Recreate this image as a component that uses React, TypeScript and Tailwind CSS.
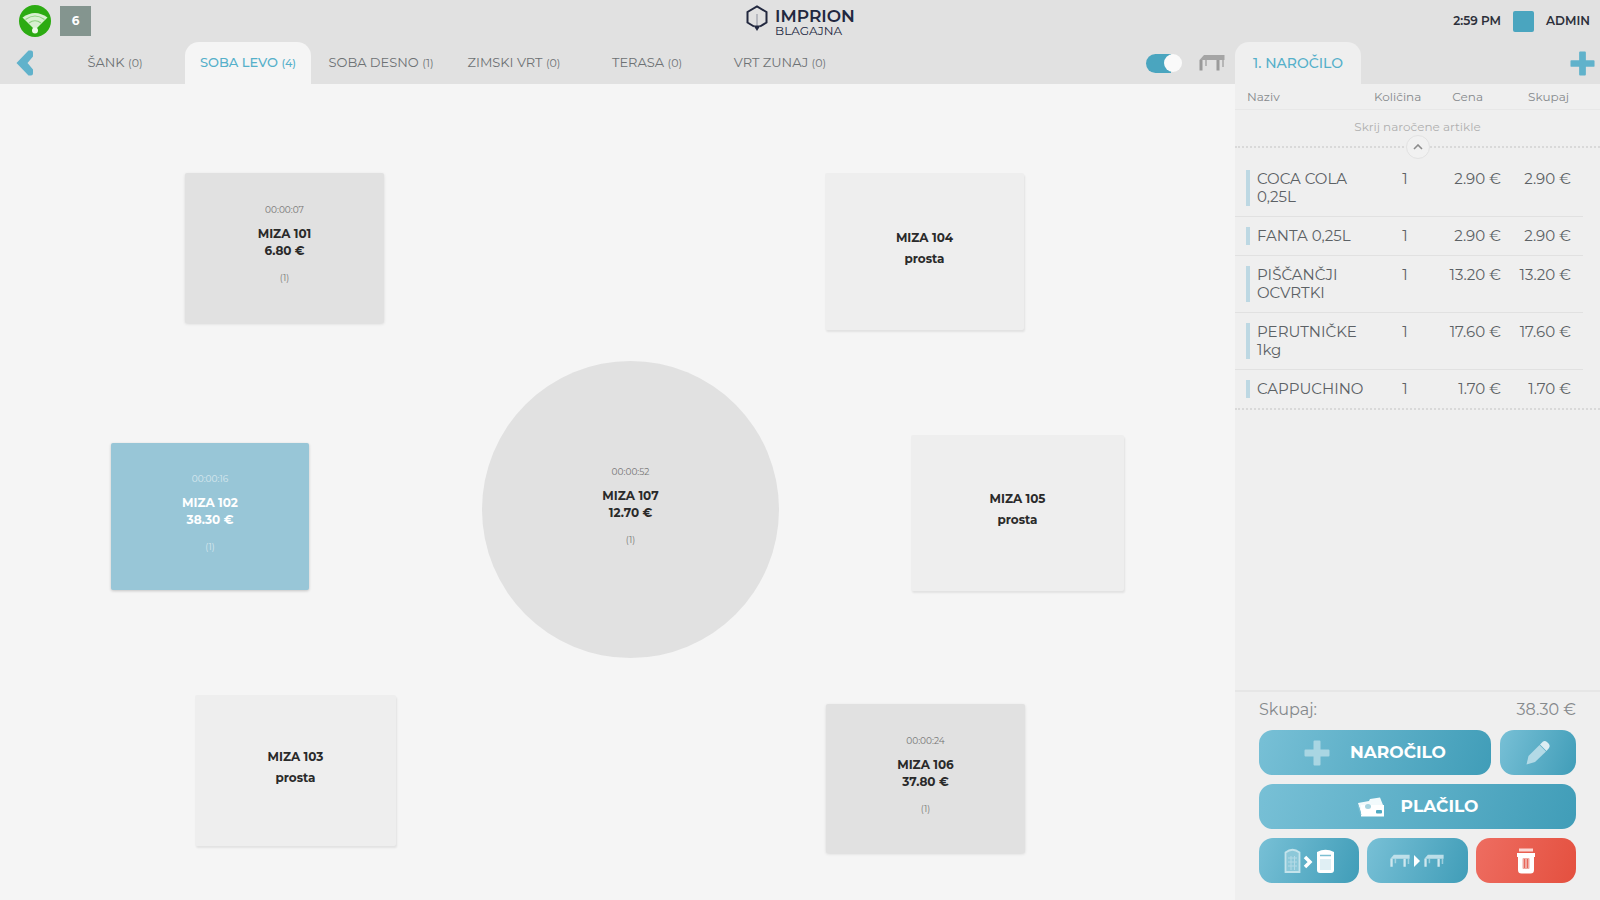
import React, { useState } from 'react';
import clsx from 'clsx';

type Room = { name: string; count: number };

type TableItem = {
  name: string;
  place: string;
  status: 'free' | 'taken' | 'selected';
  round?: boolean;
  time?: string;
  total?: string;
};

const rooms: Room[] = [
  { name: 'ŠANK', count: 0 },
  { name: 'SOBA LEVO', count: 4 },
  { name: 'SOBA DESNO', count: 1 },
  { name: 'ZIMSKI VRT', count: 0 },
  { name: 'TERASA', count: 0 },
  { name: 'VRT ZUNAJ', count: 0 },
];

const tables: TableItem[] = [
  { name: 'MIZA 101', place: 'left-[185px] top-[89px] w-[199px] h-[150px]', status: 'taken', time: '00:00:07', total: '6.80 €' },
  { name: 'MIZA 102', place: 'left-[111px] top-[359px] w-[198px] h-[147px]', status: 'selected', time: '00:00:16', total: '38.30 €' },
  { name: 'MIZA 103', place: 'left-[195px] top-[611px] w-[201px] h-[151px]', status: 'free' },
  { name: 'MIZA 104', place: 'left-[825px] top-[89px] w-[199px] h-[157px]', status: 'free' },
  { name: 'MIZA 105', place: 'left-[911px] top-[351px] w-[213px] h-[156px]', status: 'free' },
  { name: 'MIZA 106', place: 'left-[826px] top-[620px] w-[199px] h-[149px]', status: 'taken', time: '00:00:24', total: '37.80 €' },
  { name: 'MIZA 107', place: 'left-[482px] top-[277px] w-[297px] h-[297px]', status: 'taken', round: true, time: '00:00:52', total: '12.70 €' },
];

const items = [
  { name: 'COCA COLA 0,25L', qty: 1, price: '2.90 €', total: '2.90 €' },
  { name: 'FANTA 0,25L', qty: 1, price: '2.90 €', total: '2.90 €' },
  { name: 'PIŠČANČJI OCVRTKI', qty: 1, price: '13.20 €', total: '13.20 €' },
  { name: 'PERUTNIČKE 1kg', qty: 1, price: '17.60 €', total: '17.60 €' },
  { name: 'CAPPUCHINO', qty: 1, price: '1.70 €', total: '1.70 €' },
];

function WifiBadge() {
  return (
    <svg viewBox="0 0 32 32" className="size-8">
      <circle cx="16" cy="16" r="16" fill="#2cab12" />
      <path d="M3.5 12.5 Q16 3.5 28.5 12.5 L16 25 Z" fill="#d8f0d0" />
      <path d="M6.5 14.5 Q16 7.5 25.5 14.5 M10 18 Q16 13.5 22 18" fill="none" stroke="#8fd080" strokeWidth="1.2" />
      <circle cx="16" cy="25.5" r="3" fill="#eefaea" />
    </svg>
  );
}

function Logo() {
  return (
    <div className="flex items-start gap-[6px] text-[#22283f]">
      <svg viewBox="0 0 24 27" className="h-[27px] w-6" fill="none" stroke="currentColor">
        <path d="M9 21.5 L2.5 17.5 V7 L12 1.5 L21.5 7 V17.5 L15 21.5" strokeWidth="2" />
        <path d="M12 9 V21" strokeWidth="1.5" stroke="#a9abb5" />
        <path d="M8.5 20.5 H15.5 L12 26 Z" fill="currentColor" stroke="none" />
      </svg>
      <div className="flex flex-col pt-[3px]">
        <span className="text-[17px] leading-[17px] font-semibold">IMPRION</span>
        <span className="text-[12px] leading-[12px]">BLAGAJNA</span>
      </div>
    </div>
  );
}

function DeskIcon({ className }: { className?: string }) {
  return (
    <svg viewBox="0 0 26 16" className={className} fill="currentColor">
      <path d="M5 0 H25.5 V5 H0.5 Z" opacity="0.85" />
      <path d="M0.5 5 H3.5 V15.5 H0.5 Z M17.5 5 H20.5 V15.5 H17.5 Z" />
      <path d="M6 5 H8 V11 H6 Z M23 5 H25 V12 H23 Z" opacity="0.6" />
    </svg>
  );
}

function PlusIcon({ className }: { className?: string }) {
  return (
    <svg viewBox="0 0 26 26" className={className} fill="currentColor">
      <path d="M10.5 0.5 H15.5 Q16.5 0.5 16.5 1.5 V9.5 H24.5 Q25.5 9.5 25.5 10.5 V15.5 Q25.5 16.5 24.5 16.5 H16.5 V24.5 Q16.5 25.5 15.5 25.5 H10.5 Q9.5 25.5 9.5 24.5 V16.5 H1.5 Q0.5 16.5 0.5 15.5 V10.5 Q0.5 9.5 1.5 9.5 H9.5 V1.5 Q9.5 0.5 10.5 0.5 Z" />
    </svg>
  );
}

function PencilIcon() {
  return (
    <svg viewBox="0 0 26 26" className="size-[26px]">
      <path d="M1.5 24.5 L3.5 16 L14.5 5 L21 11.5 L10 22 Z" fill="#b3dae6" />
      <path d="M15 4.5 L18 1.5 Q20 0.5 22 2 L24 4 Q25.5 6 24 8 L21.5 11 Z" fill="#dcedf3" />
    </svg>
  );
}

function CashIcon() {
  return (
    <svg viewBox="0 0 28 20" className="h-5 w-7">
      <path d="M1 6 L12 4 L13 2 L23 0.5 L26 8 V18 L5 19 Z" fill="#f2fafc" />
      <path d="M4 8 H27 V19.5 H4 Z" fill="#ffffff" />
      <ellipse cx="11" cy="9.5" rx="3" ry="2.5" fill="#a6d3e0" />
      <rect x="19" y="13" width="6" height="3.5" rx="1" fill="#4fa9c2" />
      <path d="M1 8 L4 18" stroke="#7cc0d4" strokeWidth="1" />
    </svg>
  );
}

function MoveItemsIcon() {
  return (
    <svg viewBox="0 0 52 26" className="h-[26px] w-[52px]">
      <path d="M2.5 4.5 Q9.5 -1 16.5 4.5 V24 H2.5 Z" fill="#8cc8d9" stroke="#c4e3eb" strokeWidth="1.8" />
      <path d="M5 10 H14 M5 14 H14 M5 18 H14 M8 8 V22 M11.5 8 V22" stroke="#b3dae6" />
      <path d="M22 9 L27 14 L22 19" fill="none" stroke="#ffffff" strokeWidth="3.5" />
      <path d="M34 4 Q42.5 -0.5 51 4 V22 Q51 25 48 25 H37 Q34 25 34 22 Z" fill="#ffffff" />
      <path d="M37 7.5 H48" stroke="#7cbfd2" strokeWidth="1.5" />
      <rect x="37" y="11" width="11" height="11" fill="#e0eff4" />
    </svg>
  );
}

function BinIcon() {
  return (
    <svg viewBox="0 0 20 26" className="h-[26px] w-5">
      <path d="M3 0.5 H17 V3.5 H3 Z" fill="#fbd9d5" />
      <path d="M1 5 H19 V9 H18 V22 Q18 25.5 14.5 25.5 H5.5 Q2 25.5 2 22 V9 H1 Z" fill="#ffffff" />
      <rect x="6.5" y="10" width="7" height="11" rx="1" fill="#f0aaa3" />
      <path d="M8.5 11 V20 M11.5 11 V20" stroke="#e8665a" />
    </svg>
  );
}

const blueButton =
  'flex h-[45px] items-center justify-center rounded-[14px] bg-linear-[110deg] from-[#78c0d6] to-[#409db8] text-white cursor-pointer';

function FloorTable({ table }: { table: TableItem }) {
  const free = table.status === 'free';
  return (
    <button
      className={clsx(
        'absolute flex flex-col items-center justify-center pb-2 text-[12px] font-bold cursor-pointer',
        table.place,
        table.round ? 'rounded-full' : 'rounded-[2px]',
        free && 'bg-[#eeeeee] text-[#2a2a2a] leading-[21px] shadow-[1px_2px_2px_rgba(0,0,0,0.08)]',
        table.status === 'taken' && 'bg-[#e1e1e1] text-[#2a2a2a] leading-[17px]',
        table.status === 'taken' && !table.round && 'shadow-[0_1px_3px_rgba(0,0,0,0.12)]',
        table.status === 'selected' && 'bg-[#98c6d7] text-white leading-[17px] shadow-[0_1px_3px_rgba(0,0,0,0.2)]',
      )}
    >
      {table.time && <span className="mb-2 text-[9px] leading-[14px] font-normal opacity-60">{table.time}</span>}
      <span>{table.name}</span>
      <span>{free ? 'prosta' : table.total}</span>
      {table.time && <span className="mt-3 text-[9px] leading-[14px] font-normal opacity-60">(1)</span>}
    </button>
  );
}

function OrderPanel() {
  return (
    <aside className="flex flex-col bg-[#efefef] text-[#5c6165]">
      <table className="w-full table-fixed border-collapse">
        <colgroup>
          <col />
          <col className="w-[62px]" />
          <col className="w-[65px]" />
          <col className="w-[82px]" />
          <col className="w-[17px]" />
        </colgroup>
        <thead className="text-[12px] leading-[25px] text-[#85898c]">
          <tr className="border-b border-[#e7e7e7]">
            <th className="pl-3 text-left font-normal">Naziv</th>
            <th className="pr-[18px] text-right font-normal whitespace-nowrap">Količina</th>
            <th className="pr-[18px] text-right font-normal">Cena</th>
            <th className="pr-[14px] text-right font-normal">Skupaj</th>
            <td />
          </tr>
        </thead>
        <tbody className="text-[15px] leading-[18px]">
          <tr>
            <td colSpan={5} className="pb-3">
              <div className="relative border-b-2 border-dotted border-[#d9d9d9] pt-2 pb-[11px] text-center text-[12px] leading-[17px] text-[#b0b0b0]">
                Skrij naročene artikle
                <button
                  aria-label="Skrij"
                  className="absolute -bottom-[13px] left-1/2 flex size-6 -translate-x-1/2 items-center justify-center rounded-full border border-[#e2e2e2] bg-[#f1f1f1] cursor-pointer"
                >
                  <svg viewBox="0 0 10 6" className="h-[6px] w-[10px]" fill="none" stroke="#8c8c8c" strokeWidth="1.6">
                    <path d="M1 5 L5 1 L9 5" />
                  </svg>
                </button>
              </div>
            </td>
          </tr>
          {items.map((item, i) => {
            const cell = clsx('py-[10px] align-top', i < items.length - 1 && 'border-b border-[#e1e1e1]');
            return (
              <tr key={item.name}>
                <td className={clsx(cell, 'pl-[11px]')}>
                  <div className="flex gap-[7px]">
                    <span className="w-1 shrink-0 bg-[#bdd8e3]" />
                    <span>{item.name}</span>
                  </div>
                </td>
                <td className={clsx(cell, 'text-center')}>{item.qty}</td>
                <td className={clsx(cell, 'text-right whitespace-nowrap')}>{item.price}</td>
                <td className={clsx(cell, 'pr-3 text-right whitespace-nowrap')}>{item.total}</td>
                <td />
              </tr>
            );
          })}
        </tbody>
      </table>
      <div className="border-t-2 border-dotted border-[#d9d9d9]" />

      <div className="mt-auto flex flex-col gap-[9px] border-t-2 border-[#e6e6e6] px-6 pt-[7px] pb-[17px]">
        <div className="flex justify-between text-[16px] leading-[22px] text-[#85898c]">
          <span>Skupaj:</span>
          <span>38.30 €</span>
        </div>
        <div className="flex gap-[9px]">
          <button className={clsx(blueButton, 'grow gap-5 text-[17px] font-bold')}>
            <PlusIcon className="size-[26px] text-[#a9d6e3]" />
            NAROČILO
          </button>
          <button aria-label="Uredi" className={clsx(blueButton, 'w-[76px]')}>
            <PencilIcon />
          </button>
        </div>
        <button className={clsx(blueButton, 'gap-4 text-[17px] font-bold')}>
          <CashIcon />
          PLAČILO
        </button>
        <div className="grid grid-cols-3 gap-2">
          <button aria-label="Prenesi artikle" className={blueButton}>
            <MoveItemsIcon />
          </button>
          <button aria-label="Prenesi mizo" className={clsx(blueButton, 'gap-1')}>
            <DeskIcon className="h-[18px] w-5 text-[#cfe7ee]" />
            <svg viewBox="0 0 6 12" className="h-3 w-[6px]" fill="#ffffff">
              <path d="M0 0 L6 6 L0 12 Z" />
            </svg>
            <DeskIcon className="h-[18px] w-5 text-[#cfe7ee]" />
          </button>
          <button
            aria-label="Izbriši"
            className="flex h-[45px] items-center justify-center rounded-[14px] bg-linear-[110deg] from-[#ee6d61] to-[#e4503f] cursor-pointer"
          >
            <BinIcon />
          </button>
        </div>
      </div>
    </aside>
  );
}

export default function App() {
  const [activeRoom, setActiveRoom] = useState('SOBA LEVO');

  return (
    <div className="flex min-h-screen flex-col bg-[#f5f5f5] font-[Montserrat,Inter,sans-serif]">
      <header className="bg-[#e1e1e1]">
        <div className="grid h-[42px] grid-cols-[1fr_auto_1fr] items-center">
          <div className="flex items-center gap-[9px] pl-[19px]">
            <WifiBadge />
            <span className="flex h-[30px] w-[31px] items-center justify-center bg-[#84958f] text-[12px] font-bold text-white">6</span>
          </div>
          <Logo />
          <div className="flex items-center justify-end gap-3 pr-[10px] text-[12px] font-semibold text-[#2c2f3a]">
            <span>2:59 PM</span>
            <span className="size-[21px] rounded-[2px] bg-[#4aa5bf]" />
            <span>ADMIN</span>
          </div>
        </div>

        <div className="grid h-[42px] grid-cols-[1fr_365px]">
          <div className="flex items-center pl-4 pr-[10px]">
            <button aria-label="Nazaj" className="w-9 cursor-pointer">
              <svg viewBox="0 0 18 26" className="h-[26px] w-[18px]">
                <path d="M12.5 0.5 H15 Q17 0.5 17 2.5 V6.5 L11.5 13 L17 19.5 V23.5 Q17 25.5 15 25.5 H12.5 L0.5 13 Z" fill="#60b2cb" />
              </svg>
            </button>
            <nav className="flex h-full">
              {rooms.map((room) => (
                <button
                  key={room.name}
                  onClick={() => setActiveRoom(room.name)}
                  className={clsx(
                    'mr-[7px] w-[126px] text-[13px] whitespace-nowrap cursor-pointer',
                    room.name === activeRoom ? 'rounded-t-[14px] bg-[#f5f5f5] font-medium text-[#55b0ca]' : 'text-[#6d7174]',
                  )}
                >
                  {room.name} <span className="text-[11px]">({room.count})</span>
                </button>
              ))}
            </nav>
            <label className="ml-auto flex cursor-pointer items-center">
              <input type="checkbox" defaultChecked aria-label="Prikaz miz" className="peer sr-only" />
              <span className="flex h-[19px] w-9 items-center justify-start rounded-full bg-[#c4c4c4] peer-checked:justify-end peer-checked:bg-linear-to-r peer-checked:from-[#4aa5bf] peer-checked:from-70% peer-checked:to-[#e1e1e1] peer-checked:to-70%">
                <span className="size-[18px] rounded-full bg-[#fafafa]" />
              </span>
            </label>
            <DeskIcon className="ml-[17px] h-4 w-[26px] text-[#9a9a9a]" />
          </div>
          <div className="flex items-center justify-between pr-[5px]">
            <button className="h-full w-[126px] rounded-t-[14px] bg-[#efefef] text-[14px] font-medium text-[#55b0ca] cursor-pointer">
              1. NAROČILO
            </button>
            <button aria-label="Dodaj naročilo" className="cursor-pointer text-[#60b2cb]">
              <PlusIcon className="size-[25px]" />
            </button>
          </div>
        </div>
      </header>

      <div className="grid grow grid-cols-[1fr_365px]">
        <main className="relative min-h-[800px] overflow-hidden">
          {tables.map((table) => (
            <FloorTable key={table.name} table={table} />
          ))}
        </main>
        <OrderPanel />
      </div>
    </div>
  );
}
